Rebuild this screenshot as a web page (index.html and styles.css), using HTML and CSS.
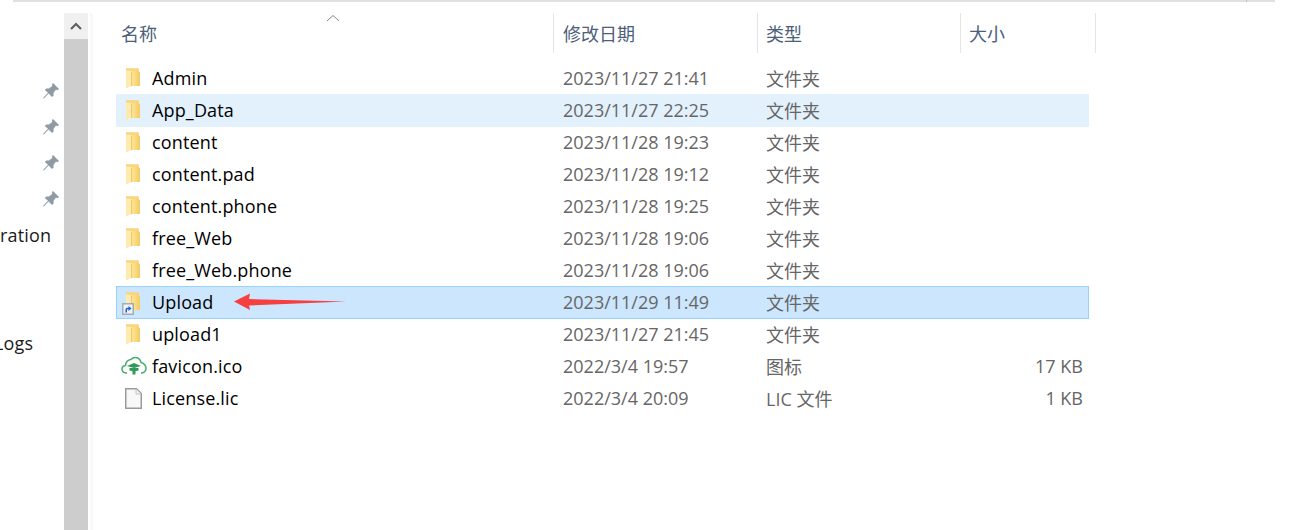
FILE: index.html
```html
<!DOCTYPE html>
<html lang="zh-CN">
<head>
    <meta charset="UTF-8">
    <meta name="viewport" content="width=device-width, initial-scale=1.0">
    <title>Explorer</title>
    <link rel="stylesheet" href="styles.css">
</head>
<body>
    <svg class="defs" width="0" height="0">
        <defs>
            <linearGradient id="folderFill" x1="0" y1="0" x2="1" y2="0">
                <stop offset="0" stop-color="#fbe59c"/>
                <stop offset=".5" stop-color="#f9dc86"/>
                <stop offset="1" stop-color="#f6cc66"/>
            </linearGradient>
            <symbol id="folder" viewBox="0 0 16 21">
                <path d="M1 .5H13.500V4H15V18H1Z" fill="#f5cd68"/>
                <path d="M6 2.500H14V18H6Z" fill="url(#folderFill)"/>
                <path d="M1 1.500L6.500 3V18L1 20.500Z" fill="#fdecb2"/>
                <path d="M6 3.500H7V18H6Z" fill="#f3c763"/>
                <path d="M1 .5H13.500V2.500H1Z" fill="#f8d67c"/>
            </symbol>
            <symbol id="pin" viewBox="0 0 16 16">
                <path d="M10 0L16 6L14.500 7.200L13 6.600L10.500 10L10.600 12.600L9 14L5.600 10.400L.8 15.600L0 15L5 9.800L1.800 7L3.200 5.400L6 5.500L9.400 2.800L8.800 1.400Z" fill="#8e9ba4"/>
            </symbol>
        </defs>
    </svg>

    <div class="topline"></div>

    <div class="window">
        <aside class="quick">
            <div class="quick-row"><svg class="pin"><use href="#pin"/></svg></div>
            <div class="quick-row"><svg class="pin"><use href="#pin"/></svg></div>
            <div class="quick-row"><svg class="pin"><use href="#pin"/></svg></div>
            <div class="quick-row"><svg class="pin"><use href="#pin"/></svg></div>
            <div class="quick-row"><span class="quick-name">ration</span></div>
            <div class="quick-row"></div>
            <div class="quick-row"></div>
            <div class="quick-row"><span class="quick-name cut">Logs</span></div>
        </aside>

        <div class="scrollbar">
            <div class="scroll-up">
                <svg width="12" height="8" viewBox="0 0 12 8"><path d="M1 7L6 2L11 7" fill="none" stroke="#606060" stroke-width="2.200"/></svg>
            </div>
        </div>
        <div class="split"></div>

        <main class="files">
            <div class="head">
                <div class="col-name head-cell">名称
                    <svg class="sort" width="14" height="8" viewBox="0 0 14 8"><path d="M1 7L7 1.500L13 7" fill="none" stroke="#8a8a8a"/></svg>
                </div>
                <div class="col-date head-cell">修改日期</div>
                <div class="col-type head-cell">类型</div>
                <div class="col-size head-cell">大小</div>
            </div>

            <div class="list">
                <div class="row">
                    <div class="col-name"><svg class="ico"><use href="#folder"/></svg>Admin</div>
                    <div class="col-date">2023/11/27 21:41</div>
                    <div class="col-type">文件夹</div>
                    <div class="col-size"></div>
                </div>
                <div class="row hover">
                    <div class="col-name"><svg class="ico"><use href="#folder"/></svg>App_Data</div>
                    <div class="col-date">2023/11/27 22:25</div>
                    <div class="col-type">文件夹</div>
                    <div class="col-size"></div>
                </div>
                <div class="row">
                    <div class="col-name"><svg class="ico"><use href="#folder"/></svg>content</div>
                    <div class="col-date">2023/11/28 19:23</div>
                    <div class="col-type">文件夹</div>
                    <div class="col-size"></div>
                </div>
                <div class="row">
                    <div class="col-name"><svg class="ico"><use href="#folder"/></svg>content.pad</div>
                    <div class="col-date">2023/11/28 19:12</div>
                    <div class="col-type">文件夹</div>
                    <div class="col-size"></div>
                </div>
                <div class="row">
                    <div class="col-name"><svg class="ico"><use href="#folder"/></svg>content.phone</div>
                    <div class="col-date">2023/11/28 19:25</div>
                    <div class="col-type">文件夹</div>
                    <div class="col-size"></div>
                </div>
                <div class="row">
                    <div class="col-name"><svg class="ico"><use href="#folder"/></svg>free_Web</div>
                    <div class="col-date">2023/11/28 19:06</div>
                    <div class="col-type">文件夹</div>
                    <div class="col-size"></div>
                </div>
                <div class="row">
                    <div class="col-name"><svg class="ico"><use href="#folder"/></svg>free_Web.phone</div>
                    <div class="col-date">2023/11/28 19:06</div>
                    <div class="col-type">文件夹</div>
                    <div class="col-size"></div>
                </div>
                <div class="row selected">
                    <div class="col-name">
                        <span class="ico-wrap">
                            <svg class="ico"><use href="#folder"/></svg>
                            <svg class="shortcut" viewBox="0 0 12 12">
                                <rect x=".75" y=".75" width="10.500" height="10.500" fill="#eef1f8" stroke="#a4abb6" stroke-width="1.500"/>
                                <path d="M3.500 9.500V6.500Q3.500 4.800 5.500 4.800H6.500V3L9.500 5.500L6.500 8V6.300H5.500Q5 6.300 5 7V9.500Z" fill="#1d5fc4"/>
                            </svg>
                        </span>Upload
                        <svg class="arrow" width="114" height="20" viewBox="0 0 114 20">
                            <path d="M0 9.500L16 1.500L15 7L112 9.500L15 13.500L16 18Z" fill="#f5403f"/>
                        </svg>
                    </div>
                    <div class="col-date">2023/11/29 11:49</div>
                    <div class="col-type">文件夹</div>
                    <div class="col-size"></div>
                </div>
                <div class="row">
                    <div class="col-name"><svg class="ico"><use href="#folder"/></svg>upload1</div>
                    <div class="col-date">2023/11/27 21:45</div>
                    <div class="col-type">文件夹</div>
                    <div class="col-size"></div>
                </div>
                <div class="row">
                    <div class="col-name">
                        <svg class="ico wide" viewBox="0 0 26 20">
                            <path d="M6 17H5Q1 16.500 1 13Q1 10 4.500 9.500Q5 4 10 3.500Q12 1 15 1.500Q19 2 20 6.500Q25 8 25 12.500Q25 16 21 17H20" fill="none" stroke="#46ad6d" stroke-width="1.500"/>
                            <path d="M6 10L13 7L20 10L13 12Z" fill="#2f9a5c"/>
                            <path d="M8.500 12H17.500V14.500L13 15.500L8.500 14.500ZM11.500 15H14.500V18.500H11.500Z" fill="#2f9a5c"/>
                        </svg>favicon.ico
                    </div>
                    <div class="col-date">2022/3/4 19:57</div>
                    <div class="col-type">图标</div>
                    <div class="col-size">17 KB</div>
                </div>
                <div class="row">
                    <div class="col-name">
                        <svg class="ico doc" viewBox="0 0 17 21">
                            <path d="M.75 .75H11.500L16.250 5.500V20.250H.75Z" fill="#f8f8f8" stroke="#9a9a9a" stroke-width="1.500"/>
                            <path d="M11 1V6H16" fill="#eee" stroke="#c4c4c4"/>
                        </svg>License.lic
                    </div>
                    <div class="col-date">2022/3/4 20:09</div>
                    <div class="col-type">LIC 文件</div>
                    <div class="col-size">1 KB</div>
                </div>
            </div>
        </main>
    </div>
</body>
</html>
```

FILE: styles.css
```css
* { box-sizing: border-box; }
html, body { height: 100%; }
body {
    margin: 0;
    background: #fff;
    color: #000;
    font-family: "Open Sans", "Noto Sans CJK SC", sans-serif;
    font-size: 18px;
    overflow: hidden;
}
.defs { display: block; height: 0; }

.topline { height: 2px; margin: 0 14px 0 13px; background: #e0e0e0; position: relative; }
.topline::after { content: ""; position: absolute; left: 1233px; top: 0; width: 1px; height: 2px; background: #c4c4c4; }

.window { display: flex; height: 528px; padding-top: 11px; }

/* left nav, mostly cut off */
.quick { width: 64px; padding-top: 60px; overflow: hidden; flex: none; }
.quick-row { height: 36px; display: flex; align-items: center; color: #1a1a1a; letter-spacing: .15px; }
.quick-name { white-space: nowrap; }
.quick-name.cut { margin-left: -6px; }
.pin { width: 16px; height: 16px; margin-left: 43px; }

.scrollbar { width: 24px; background: #cdcdcd; flex: none; }
.scroll-up { height: 26px; background: #f0f0f0; display: flex; align-items: center; justify-content: center; }
.split { width: 3px; margin-left: 2px; background: #f9f9f9; flex: none; }

.files { padding-left: 23px; flex: 1; }

.head { display: flex; height: 40px; margin-bottom: 9px; }
.head-cell { color: #4c607a; display: flex; align-items: center; position: relative; border-right: 1px solid #e5e5e5; letter-spacing: 0; }
.head .col-name { width: 438px; padding-left: 5px; color: #4c607a; letter-spacing: 0; }
.head .col-date { width: 204px; padding-left: 9px; }
.head .col-type { width: 203px; padding-left: 8px; }
.head .col-size { width: 135px; flex: none; padding-left: 8px; padding-right: 0; }
.sort { position: absolute; left: 210px; top: 1px; }

.list { width: 973px; }
.row { display: flex; height: 32px; align-items: center; color: #666; border: 1px solid transparent; }
.row.hover, .row.selected { height: 33px; margin-bottom: -1px; padding-bottom: 1px; }
.row.hover { background: #e3f1fd; }
.row.selected { background: #cce6fd; border-color: #99d1ff; }

.col-name { width: 446px; display: flex; align-items: center; color: #000; padding-left: 8px; position: relative; letter-spacing: .15px; }
.ico { width: 16px; height: 21px; margin-right: 11px; flex: none; }
.ico.wide { width: 26px; height: 20px; margin-left: -4px; margin-right: 5px; }
.ico.doc { width: 17px; margin-right: 10px; }
.ico-wrap { position: relative; display: flex; }
.shortcut { position: absolute; left: -3px; bottom: -2px; width: 12px; height: 12px; }
.arrow { position: absolute; left: 117px; top: 2px; }

.col-date { width: 203px; }
.col-type { width: 203px; }
.col-size { flex: 1; text-align: right; padding-right: 5px; }
```
